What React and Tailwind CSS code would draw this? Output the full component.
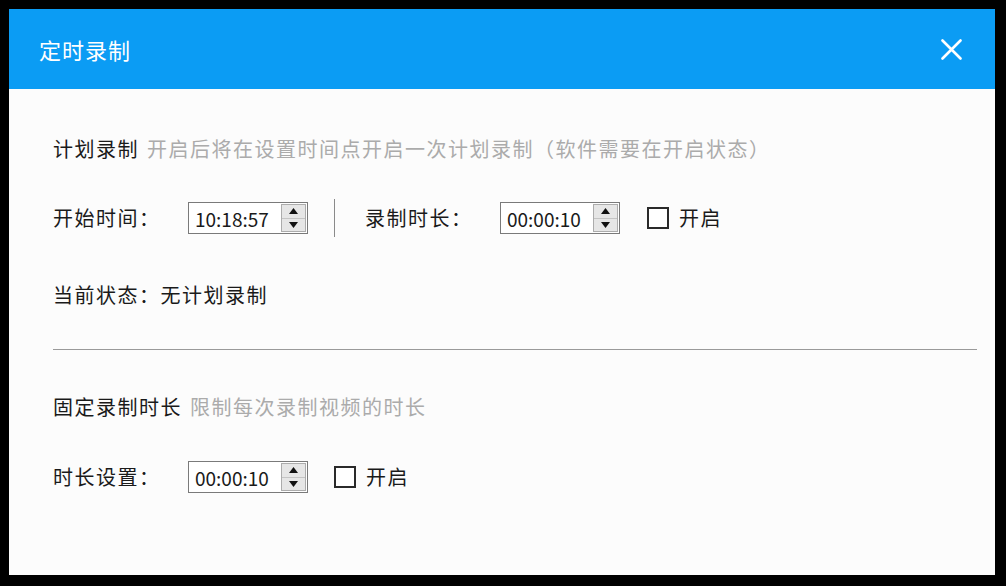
import React from "react";

const font = { fontFamily: '"Noto Sans CJK SC", "Noto Sans", sans-serif' };

function Spin({ value }) {
  return (
    <div className="flex h-[32px] w-[120px] items-stretch border border-[#7a7a7a] bg-white">
      <div className="flex flex-1 items-center pl-[6px] text-[19px] leading-none text-[#1a1a1a]">{value}</div>
      <div className="my-[1px] mr-[1px] flex w-[25px] flex-col border border-[#acacac] bg-[#e6e6e6]">
        <div className="flex flex-1 items-center justify-center border-b border-[#c4c4c4]">
          <svg width="9" height="6" viewBox="0 0 9 6"><path d="M0 6 L4.5 0 L9 6 Z" fill="#111" /></svg>
        </div>
        <div className="flex flex-1 items-center justify-center">
          <svg width="9" height="6" viewBox="0 0 9 6"><path d="M0 0 L9 0 L4.5 6 Z" fill="#111" /></svg>
        </div>
      </div>
    </div>
  );
}

function Check({ label, ml }) {
  return (
    <div className={`flex items-center ${ml}`}>
      <div className="h-[22px] w-[22px] border-2 border-[#2a2a2a] bg-white" />
      <span className="ml-[10px] text-[20px] tracking-[1.5px] text-[#1a1a1a]">{label}</span>
    </div>
  );
}

export default function App() {
  return (
    <div className="flex h-[586px] w-[1006px] bg-black pb-[11px] pl-[9px] pr-[11px] pt-[9px]" style={font}>
      <div className="flex flex-1 flex-col bg-[#fcfcfc]">
        <div className="flex h-[80px] items-center justify-between bg-[#0b9cf4] pl-[30px] pr-[33px]">
          <span className="text-[22px] tracking-[1px] text-white">定时录制</span>
          <svg width="21" height="21" viewBox="0 0 21 21">
            <path d="M1.5 1.5 L19.5 19.5 M19.5 1.5 L1.5 19.5" stroke="#fff" strokeWidth="2.6" strokeLinecap="round" />
          </svg>
        </div>
        <div className="flex flex-col pl-[44px] pr-[18px]">
          <div className="mt-[45px] flex h-[30px] items-center text-[20px] tracking-[1.5px]">
            <span className="text-[#1a1a1a]">计划录制</span>
            <span className="ml-[8px] text-[#ababab]">开启后将在设置时间点开启一次计划录制（软件需要在开启状态）</span>
          </div>
          <div className="mt-[34px] flex h-[40px] items-center">
            <span className="w-[135px] text-[20px] tracking-[1.5px] text-[#1a1a1a]">开始时间：</span>
            <Spin value="10:18:57" />
            <div className="ml-[26px] h-[38px] w-px bg-[#8a8a8a]" />
            <span className="ml-[30px] w-[135px] text-[20px] tracking-[1.5px] text-[#1a1a1a]">录制时长：</span>
            <Spin value="00:00:10" />
            <Check label="开启" ml="ml-[27px]" />
          </div>
          <div className="mt-[42px] flex h-[30px] items-center text-[20px] tracking-[1.5px] text-[#1a1a1a]">
            当前状态：无计划录制
          </div>
          <div className="mt-[39px] h-px bg-[#9a9a9a]" />
          <div className="mt-[42px] flex h-[30px] items-center text-[20px] tracking-[1.5px]">
            <span className="text-[#1a1a1a]">固定录制时长</span>
            <span className="ml-[8px] text-[#ababab]">限制每次录制视频的时长</span>
          </div>
          <div className="mt-[35px] flex h-[40px] items-center">
            <span className="w-[135px] text-[20px] tracking-[1.5px] text-[#1a1a1a]">时长设置：</span>
            <Spin value="00:00:10" />
            <Check label="开启" ml="ml-[26px]" />
          </div>
        </div>
      </div>
    </div>
  );
}
